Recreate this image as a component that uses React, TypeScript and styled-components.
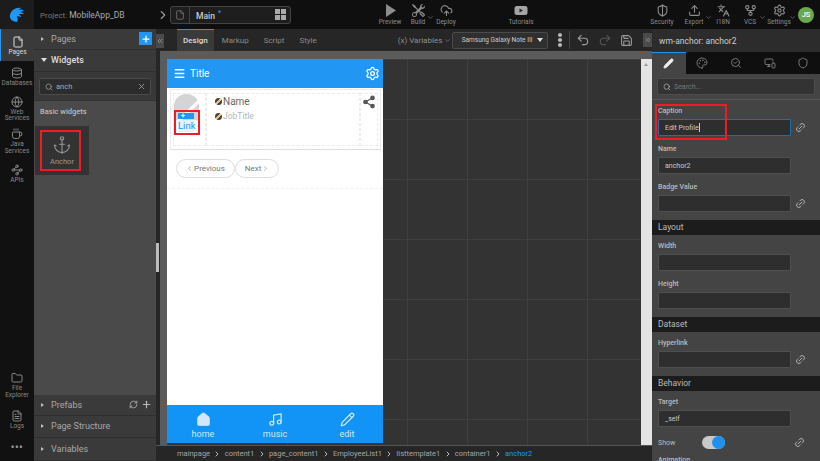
import React from "react";
import styled, { createGlobalStyle } from "styled-components";
import { BsTools } from "react-icons/bs";
import {
  Anchor,
  ChevronDown,
  ChevronLeft,
  ChevronRight,
  ChevronsLeft,
  ChevronsRight,
  CloudUpload,
  Coffee,
  Database,
  File,
  FileText,
  Folder,
  GitFork,
  Globe,
  House,
  Languages,
  Link2,
  Menu,
  MonitorSmartphone,
  Music,
  Palette,
  Pencil,
  Plus,
  Redo2,
  RefreshCw,
  Save,
  Search,
  SearchCheck,
  Settings,
  Share2,
  Shield,
  ShieldHalf,
  Undo2,
  Upload,
  Waypoints,
  X,
} from "lucide-react";

const GlobalStyle = createGlobalStyle`
  html, body {
    margin: 0;
    padding: 0;
    width: 820px;
    height: 461px;
    overflow: hidden;
    background: #111;
    font-family: Roboto, "Liberation Sans", sans-serif;
  }
  * { box-sizing: border-box; }
`;

const Shell = styled.div`
  width: 820px;
  height: 461px;
  display: grid;
  grid-template-columns: 34px 122px 496px 168px;
  grid-template-rows: 29px 432px;
  overflow: hidden;
`;

const TopBar = styled.header`
  grid-column: 1 / 5;
  background: #0f0f0f;
  display: flex;
  align-items: center;
  color: #aaa;
`;

const LogoCell = styled.div`
  width: 34px;
  height: 29px;
  background: #1c1c1c;
  display: flex;
  align-items: center;
  justify-content: center;
`;

const Project = styled.div`
  width: 122px;
  padding-left: 6px;
  font-size: 8px;
  color: #777;
  white-space: nowrap;
  b {
    font-weight: 400;
    color: #aaa;
    font-size: 8.5px;
  }
`;

const Crumb = styled.div`
  width: 14px;
  color: #999;
  display: flex;
`;

const PageSwitch = styled.div`
  width: 121px;
  height: 18px;
  border: 1px solid #444;
  border-radius: 3px;
  background: #1e1e1e;
  display: flex;
  align-items: center;
  color: #ccc;
  font-size: 8.5px;
  font-weight: 500;
`;

const PageIcon = styled.div`
  width: 19px;
  height: 100%;
  border-right: 1px solid #444;
  display: flex;
  align-items: center;
  justify-content: center;
  color: #777;
`;

const PageName = styled.div`
  flex: 1;
  padding-left: 6px;
  sup {
    color: #2196f3;
    font-size: 7px;
    margin-left: 3px;
  }
`;

const GridGlyph = styled.div`
  width: 11px;
  height: 11px;
  margin-right: 4px;
  display: grid;
  grid-template: 1fr 1fr / 1fr 1fr;
  gap: 1px;
  i {
    background: #aaa;
  }
`;

const ToolGroup = styled.div<{ $left: number }>`
  margin-left: ${(p) => p.$left}px;
  display: flex;
  align-items: flex-start;
`;

const Tool = styled.div<{ $w: number }>`
  width: ${(p) => p.$w}px;
  display: flex;
  flex-direction: column;
  align-items: center;
  color: #8c8c8c;
  font-size: 6.5px;
  line-height: 7px;
  gap: 2px;
  position: relative;
  white-space: nowrap;
`;

const Caret = styled(ChevronDown)`
  position: absolute;
  right: -2px;
  top: 10px;
`;

const Avatar = styled.div`
  width: 16px;
  height: 16px;
  margin-left: 4px;
  border-radius: 50%;
  background: #6aa84f;
  color: #fff;
  font-size: 7.5px;
  font-weight: 500;
  display: flex;
  align-items: center;
  justify-content: center;
`;

const Rail = styled.nav`
  background: #111;
  display: flex;
  flex-direction: column;
`;

const RailItem = styled.div<{ $active?: boolean; $h: number; $after?: number }>`
  height: ${(p) => p.$h}px;
  margin-bottom: ${(p) => p.$after ?? 0}px;
  padding-top: 2px;
  display: flex;
  flex-direction: column;
  align-items: center;
  justify-content: center;
  text-align: center;
  gap: 1px;
  font-size: 6.5px;
  line-height: 6.5px;
  color: ${(p) => (p.$active ? "#ddd" : "#888")};
  background: ${(p) => (p.$active ? "#3a3a3a" : "transparent")};
  border-left: ${(p) => (p.$active ? "1px solid #2196f3" : "none")};
`;

const RailSpacer = styled.div`
  flex: 1;
`;

const Dots = styled.div`
  height: 28px;
  display: flex;
  align-items: center;
  justify-content: center;
  color: #999;
  font-size: 10px;
  font-weight: 700;
  letter-spacing: 0.5px;
`;

const SidePanel = styled.aside`
  background: #3d3d3d;
  display: flex;
  flex-direction: column;
  position: relative;
`;

const SideRow = styled.div<{ $h: number; $strong?: boolean }>`
  height: ${(p) => p.$h}px;
  flex: none;
  display: flex;
  align-items: center;
  padding: 0 4px 1px 7px;
  background: #3a3a3a;
  border-bottom: 1px solid #2e2e2e;
  color: ${(p) => (p.$strong ? "#ddd" : "#a8a8a8")};
  font-size: 9px;
  font-weight: ${(p) => (p.$strong ? 500 : 400)};
`;

const Tri = styled.span<{ $down?: boolean }>`
  width: 0;
  height: 0;
  margin-right: ${(p) => (p.$down ? 4 : 7)}px;
  ${(p) =>
    p.$down
      ? "border-left: 3px solid transparent; border-right: 3px solid transparent; border-top: 4px solid #ddd;"
      : "border-top: 2.5px solid transparent; border-bottom: 2.5px solid transparent; border-left: 3px solid #bbb;"}
`;

const SelectTri = styled(Tri)`
  margin-right: 0;
`;

const RowEnd = styled.div`
  margin-left: auto;
  display: flex;
  align-items: center;
  gap: 3px;
  color: #bbb;
`;

const BlueAdd = styled.div`
  width: 13px;
  height: 13px;
  background: #2196f3;
  color: #fff;
  display: flex;
  align-items: center;
  justify-content: center;
`;

const SearchWrap = styled.div`
  height: 29px;
  flex: none;
  padding: 6px 5px;
  background: #383838;
  border-bottom: 1px solid #333;
`;

const SearchBox = styled.div`
  height: 17px;
  border: 1px solid #4a4a4a;
  border-radius: 2px;
  background: #2c2c2c;
  display: flex;
  align-items: center;
  gap: 3px;
  padding: 0 4px 0 5px;
  color: #aaa;
  font-size: 7.5px;
  svg:last-child {
    margin-left: auto;
  }
`;

const WidgetArea = styled.div`
  flex: 1;
  background: #4a4a4a;
  padding: 6px 1px;
`;

const AreaTitle = styled.div`
  color: #bbb;
  font-size: 7.5px;
  font-weight: 500;
  padding-left: 5px;
  line-height: 10px;
`;

const WidgetTile = styled.div`
  margin-top: 9px;
  width: 54px;
  height: 49px;
  background: #333;
  color: #999;
  font-size: 7.5px;
  display: flex;
  flex-direction: column;
  align-items: center;
  justify-content: center;
  gap: 2px;
  position: relative;
`;

const RedBox = styled.div<{ $l: number; $t: number; $w: number; $h: number }>`
  position: absolute;
  left: ${(p) => p.$l}px;
  top: ${(p) => p.$t}px;
  width: ${(p) => p.$w}px;
  height: ${(p) => p.$h}px;
  border: 2px solid #ee1c25;
  pointer-events: none;
`;

const Center = styled.main`
  background: #333;
  display: flex;
  flex-direction: column;
  min-width: 0;
  position: relative;
`;

const Collapse = styled.div`
  position: absolute;
  left: 0;
  top: 5px;
  width: 8px;
  height: 14px;
  background: #4a4a4a;
  color: #aaa;
  display: flex;
  align-items: center;
  justify-content: center;
`;

const Grip = styled.div`
  position: absolute;
  left: 0;
  top: 214px;
  width: 3px;
  height: 29px;
  background: #bbb;
`;

const EditorBar = styled.div`
  height: 22px;
  flex: none;
  background: #262626;
  display: flex;
  align-items: center;
  padding-left: 21px;
  color: #8a8a8a;
  font-size: 8px;
`;

const EditorTab = styled.div<{ $active?: boolean }>`
  height: 22px;
  padding: 0 6px;
  margin-right: ${(p) => (p.$active ? 2 : 3)}px;
  display: flex;
  align-items: center;
  color: ${(p) => (p.$active ? "#ddd" : "#8a8a8a")};
  background: ${(p) => (p.$active ? "#3a3a3a" : "transparent")};
  border-top: ${(p) => (p.$active ? "1px solid #2196f3" : "none")};
  font-weight: ${(p) => (p.$active ? 500 : 400)};
`;

const VarLabel = styled.div`
  margin-left: 72px;
  display: flex;
  align-items: center;
  gap: 2px;
  color: #8f8f8f;
  width: 54px;
  white-space: nowrap;
`;

const DeviceSelect = styled.div`
  width: 96px;
  height: 17px;
  background: #2f2f2f;
  border: 1px solid #4a4a4a;
  border-radius: 2px;
  display: flex;
  align-items: center;
  justify-content: space-between;
  padding: 0 4px 0 9px;
  color: #ccc;
  font-size: 6.5px;
  white-space: nowrap;
`;

const Kebab = styled.div`
  width: 4px;
  margin-left: 10px;
  display: flex;
  flex-direction: column;
  gap: 1.5px;
  i {
    width: 4px;
    height: 3.5px;
    border-radius: 50%;
    background: #b5b5b5;
  }
`;

const EditActions = styled.div`
  margin-left: 7px;
  padding-left: 6px;
  height: 18px;
  border-left: 1px solid #444;
  display: flex;
  align-items: center;
  gap: 8px;
  color: #999;
`;

const CollapseRight = styled.div`
  margin-left: auto;
  width: 9px;
  height: 14px;
  background: #4a4a4a;
  color: #aaa;
  display: flex;
  align-items: center;
  justify-content: center;
`;

const CanvasRow = styled.div`
  flex: 1;
  display: flex;
  min-height: 0;
`;

const Ruler = styled.div`
  width: 11px;
  flex: none;
  background: #5b5b5b;
  border-left: 4px solid #262626;
`;

const Stage = styled.div`
  flex: 1;
  display: flex;
  flex-direction: column;
  min-width: 0;
`;

const TopRuler = styled.div`
  height: 8px;
  flex: none;
  background: #5b5b5b;
`;

const Board = styled.div`
  flex: 1;
  display: flex;
  background-color: #333;
  background-image: linear-gradient(#3f3f3f 1px, transparent 1px),
    linear-gradient(90deg, #3f3f3f 1px, transparent 1px);
  background-size: 60px 60px;
`;

const Phone = styled.div`
  width: 216px;
  margin-bottom: 2px;
  background: #fff;
  display: flex;
  flex-direction: column;
`;

const PhoneHead = styled.div`
  height: 29px;
  flex: none;
  background: #2196f3;
  color: #fff;
  display: flex;
  align-items: center;
  padding: 0 3px 0 6px;
  gap: 4px;
  font-size: 10px;
  svg:last-child {
    margin-left: auto;
  }
`;

const ListItem = styled.div`
  height: 61px;
  flex: none;
  margin: 1px 2px 0 3px;
  border: 1px solid #ececec;
  border-bottom-color: #ddd;
  padding: 3px 2px;
  display: flex;
`;

const Cell = styled.div<{ $w?: number; $grow?: boolean }>`
  width: ${(p) => (p.$w ? `${p.$w}px` : "auto")};
  flex: ${(p) => (p.$grow ? 1 : "none")};
  border: 1px dashed #ececec;
  position: relative;
`;

const TextCell = styled(Cell)`
  padding: 2px 8px;
  display: flex;
  flex-direction: column;
  gap: 4px;
`;

const ShareCell = styled(Cell)`
  display: flex;
  justify-content: center;
  padding-top: 1px;
`;

const Thumb = styled.div`
  position: absolute;
  left: 0;
  top: 0;
  width: 25px;
  height: 26px;
  border-radius: 12px 12px 0 0;
  background: linear-gradient(135deg, #d4d4d4 58%, #fafafa 58%, #fafafa 68%, #d4d4d4 68%);
`;

const LinkWrap = styled.div`
  position: absolute;
  left: 4px;
  top: 19px;
  width: 16px;
`;

const LinkTools = styled.div`
  height: 6px;
  background: #2196f3;
  display: flex;
  align-items: center;
  padding-left: 3px;
  color: #fff;
  font-size: 7px;
  font-weight: 700;
`;

const LinkText = styled.div`
  height: 12px;
  margin-top: 1px;
  background: #e3f1fd;
  color: #2196f3;
  font-size: 9.5px;
  line-height: 12px;
  white-space: nowrap;
`;

const FieldLine = styled.div<{ $sub?: boolean }>`
  display: flex;
  align-items: center;
  gap: 1px;
  color: ${(p) => (p.$sub ? "#b5b5b5" : "#666")};
  font-size: ${(p) => (p.$sub ? 8.5 : 10)}px;
  line-height: 11px;
`;

const BindDot = styled.span`
  width: 7px;
  height: 7px;
  border-radius: 50%;
  background: linear-gradient(135deg, #444 38%, #e8c080 38%, #e8c080 62%, #444 62%);
  flex: none;
`;

const Pager = styled.div`
  height: 39px;
  flex: none;
  border-bottom: 1px dashed #f1f1f1;
  padding: 9px 9px 0;
  display: flex;
`;

const PagerBtn = styled.div<{ $w: number }>`
  width: ${(p) => p.$w}px;
  height: 19px;
  border: 1px solid #ddd;
  border-radius: 10px;
  color: #777;
  font-size: 8px;
  display: flex;
  align-items: center;
  justify-content: center;
  gap: 1px;
`;

const PhoneBody = styled.div`
  flex: 1;
`;

const TabBar = styled.div`
  height: 38px;
  flex: none;
  background: #1194f6;
  display: grid;
  grid-template-columns: repeat(3, 72px);
  color: #cfe8fd;
`;

const TabItem = styled.div`
  display: flex;
  flex-direction: column;
  align-items: center;
  justify-content: center;
  gap: 2px;
  padding-top: 2px;
  font-size: 9px;
  line-height: 10px;
`;

const Scroller = styled.div`
  width: 11px;
  flex: none;
  margin-left: auto;
  background: #e4e4e4;
  position: relative;
  &::before {
    content: "";
    position: absolute;
    left: 3px;
    top: 4px;
    border-left: 2.5px solid transparent;
    border-right: 2.5px solid transparent;
    border-bottom: 3px solid #999;
  }
`;

const Breadcrumb = styled.div`
  height: 16px;
  flex: none;
  background: #262626;
  border-top: 1px solid #555;
  display: flex;
  align-items: center;
  padding-left: 21px;
  gap: 3.3px;
  color: #a5a5a5;
  font-size: 7.5px;
  span:last-child {
    color: #2196f3;
  }
  svg {
    color: #bbb;
  }
`;

const Inspector = styled.aside`
  background: #444;
  display: flex;
  flex-direction: column;
  overflow: hidden;
  position: relative;
`;

const InspectorHead = styled.div`
  height: 23px;
  flex: none;
  background: #2c2c2c;
  color: #ccc;
  font-size: 8.5px;
  display: flex;
  align-items: center;
  padding-left: 7px;
`;

const InspectorTabs = styled.div`
  height: 22px;
  flex: none;
  background: #0f0f0f;
  display: grid;
  grid-template-columns: repeat(5, 33.6px);
`;

const InspectorTab = styled.div<{ $active?: boolean }>`
  display: flex;
  align-items: center;
  justify-content: center;
  color: ${(p) => (p.$active ? "#eee" : "#777")};
  background: ${(p) => (p.$active ? "#444" : "transparent")};
  border-top: ${(p) => (p.$active ? "1px solid #2196f3" : "none")};
`;

const PropSearch = styled.div`
  height: 26px;
  flex: none;
  padding: 4px 5px 5px;
  border-bottom: 1px solid #555;
`;

const PropSearchBox = styled.div`
  height: 17px;
  background: #333;
  border: 1px solid #4c4c4c;
  border-radius: 2px;
  display: flex;
  align-items: center;
  gap: 3px;
  padding-left: 5px;
  color: #777;
  font-size: 7px;
  svg {
    color: #bbb;
  }
`;

const Props = styled.div`
  padding: 6px 0 0 6px;
  display: flex;
  flex-direction: column;
  position: relative;
`;

const PropLabel = styled.div`
  color: #bbb;
  font-size: 7px;
  line-height: 10px;
  font-weight: 500;
`;

const PropLine = styled.div`
  height: 17px;
  margin: 3px 0 8px;
  display: flex;
  align-items: center;
  gap: 4px;
  color: #bbb;
`;

const PropInput = styled.div<{ $focus?: boolean }>`
  width: 133px;
  height: 17px;
  background: #2e2e2e;
  border: 1px solid ${(p) => (p.$focus ? "#1f6fa8" : "#4f4f4f")};
  border-radius: 1px;
  color: #ccc;
  font-size: 7px;
  display: flex;
  align-items: center;
  padding-left: 6px;
`;

const Caretline = styled.span`
  width: 1px;
  height: 9px;
  background: #ccc;
`;

const Band = styled.div`
  height: 15px;
  margin: 0 0 6px -6px;
  background: #1c1c1c;
  color: #bbb;
  font-size: 8.5px;
  line-height: 15px;
  padding-left: 6px;
`;

const ShowRow = styled.div`
  height: 15px;
  display: flex;
  align-items: center;
  color: #bbb;
  font-size: 7px;
  margin: 0 0 5px;
`;

const ToggleTrack = styled.div`
  width: 23px;
  height: 13px;
  margin-left: 27px;
  border-radius: 7px;
  background: #c9c9c9;
  display: flex;
  justify-content: flex-end;
  i {
    width: 13px;
    height: 13px;
    border-radius: 50%;
    background: #1e90f0;
  }
`;

const ChainIcon = styled(Link2)`
  flex: none;
  transform: rotate(-45deg);
`;

const ShowChain = styled(ChainIcon)`
  margin-left: 69px;
`;

function Field({ label, value, focus, link }: { label: string; value?: React.ReactNode; focus?: boolean; link?: boolean }) {
  return (
    <>
      <PropLabel>{label}</PropLabel>
      <PropLine>
        <PropInput $focus={focus}>{value}</PropInput>
        {link && <ChainIcon size={11} />}
      </PropLine>
    </>
  );
}

const crumbs = ["mainpage", "content1", "page_content1", "EmployeeList1", "listtemplate1", "container1"];

export default function App() {
  return (
    <>
      <GlobalStyle />
      <Shell>
        <TopBar>
          <LogoCell>
            <svg width="16" height="16" viewBox="0 0 16 16">
              <path d="M1 8C2 3 7 0 12 1L9 3c3-1 5 0 6 1l-4 1c2 0 3 1 4 2l-5 0c1 1 2 2 2 3l-4-1c1 2 1 4 0 6C4 15 0 12 1 8z" fill="#2196f3" />
            </svg>
          </LogoCell>
          <Project>
            Project: <b>MobileApp_DB</b>
          </Project>
          <Crumb>
            <ChevronRight size={14} />
          </Crumb>
          <PageSwitch>
            <PageIcon>
              <File size={10} />
            </PageIcon>
            <PageName>
              Main<sup>*</sup>
            </PageName>
            <GridGlyph>
              <i />
              <i />
              <i />
              <i />
            </GridGlyph>
          </PageSwitch>
          <ToolGroup $left={85}>
            <Tool $w={28}>
              <svg width="11" height="13" viewBox="0 0 11 13">
                <path d="M1 0l10 6.5L1 13z" fill="#8c8c8c" />
              </svg>
              Preview
            </Tool>
            <Tool $w={28}>
              <BsTools size={13} />
              Build
              <Caret size={7} />
            </Tool>
            <Tool $w={28}>
              <CloudUpload size={13} />
              Deploy
            </Tool>
          </ToolGroup>
          <ToolGroup $left={46}>
            <Tool $w={30}>
              <svg width="14" height="13" viewBox="0 0 14 13">
                <rect x="0.5" y="2" width="13" height="9" rx="2.5" fill="#a5a5a5" />
                <path d="M5.5 4.5l3.5 2-3.5 2z" fill="#222" />
              </svg>
              Tutorials
            </Tool>
          </ToolGroup>
          <ToolGroup $left={110}>
            <Tool $w={32}>
              <ShieldHalf size={13} />
              Security
            </Tool>
            <Tool $w={32}>
              <Upload size={13} />
              Export
              <Caret size={7} />
            </Tool>
            <Tool $w={26}>
              <Languages size={13} />
              I18N
            </Tool>
            <Tool $w={28}>
              <GitFork size={13} />
              VCS
              <Caret size={7} />
            </Tool>
            <Tool $w={30}>
              <Settings size={13} />
              Settings
              <Caret size={7} />
            </Tool>
          </ToolGroup>
          <Avatar>JS</Avatar>
        </TopBar>

        <Rail>
          <RailItem $active $h={32}>
            <File size={12} />
            Pages
          </RailItem>
          <RailItem $h={30}>
            <Database size={12} />
            Databases
          </RailItem>
          <RailItem $h={33}>
            <Globe size={12} />
            Web
            <br />
            Services
          </RailItem>
          <RailItem $h={32}>
            <Coffee size={12} />
            Java
            <br />
            Services
          </RailItem>
          <RailItem $h={34}>
            <Waypoints size={12} />
            APIs
          </RailItem>
          <RailSpacer />
          <RailItem $h={30} $after={6}>
            <Folder size={12} />
            File
            <br />
            Explorer
          </RailItem>
          <RailItem $h={28}>
            <FileText size={12} />
            Logs
          </RailItem>
          <Dots>•••</Dots>
        </Rail>

        <SidePanel>
          <SideRow $h={21}>
            <Tri />
            Pages
            <RowEnd>
              <BlueAdd>
                <Plus size={10} strokeWidth={3} />
              </BlueAdd>
            </RowEnd>
          </SideRow>
          <SideRow $h={22} $strong>
            <Tri $down />
            Widgets
          </SideRow>
          <SearchWrap>
            <SearchBox>
              <Search size={8} />
              anch
              <X size={9} />
            </SearchBox>
          </SearchWrap>
          <WidgetArea>
            <AreaTitle>Basic widgets</AreaTitle>
            <WidgetTile>
              <Anchor size={20} strokeWidth={1.3} />
              Anchor
              <RedBox $l={5} $t={4} $w={41} $h={41} />
            </WidgetTile>
          </WidgetArea>
          <SideRow $h={21}>
            <Tri />
            Prefabs
            <RowEnd>
              <RefreshCw size={9} />
              <Plus size={11} strokeWidth={2.5} />
            </RowEnd>
          </SideRow>
          <SideRow $h={22}>
            <Tri />
            Page Structure
          </SideRow>
          <SideRow $h={23}>
            <Tri />
            Variables
          </SideRow>
        </SidePanel>

        <Center>
          <Collapse>
            <ChevronsLeft size={8} />
          </Collapse>
          <Grip />
          <EditorBar>
            <EditorTab $active>Design</EditorTab>
            <EditorTab>Markup</EditorTab>
            <EditorTab>Script</EditorTab>
            <EditorTab>Style</EditorTab>
            <VarLabel>
              (x) Variables
              <ChevronDown size={7} />
            </VarLabel>
            <DeviceSelect>
              Samsung Galaxy Note III
              <SelectTri $down />
            </DeviceSelect>
            <Kebab>
              <i />
              <i />
              <i />
            </Kebab>
            <EditActions>
              <Undo2 size={14} />
              <Redo2 size={14} color="#555" />
              <Save size={13} />
            </EditActions>
            <CollapseRight>
              <ChevronsRight size={8} />
            </CollapseRight>
          </EditorBar>
          <CanvasRow>
            <Ruler />
            <Stage>
              <TopRuler />
              <Board>
                <Phone>
                  <PhoneHead>
                    <Menu size={13} strokeWidth={2.5} />
                    Title
                    <Settings size={15} />
                  </PhoneHead>
                  <ListItem>
                    <Cell $w={33}>
                      <Thumb />
                      <LinkWrap>
                        <LinkTools>+</LinkTools>
                        <LinkText>Link</LinkText>
                      </LinkWrap>
                      <RedBox $l={0} $t={16} $w={26} $h={25} />
                    </Cell>
                    <TextCell $grow>
                      <FieldLine>
                        <BindDot />
                        Name
                      </FieldLine>
                      <FieldLine $sub>
                        <BindDot />
                        JobTitle
                      </FieldLine>
                    </TextCell>
                    <ShareCell $w={18}>
                      <Share2 size={14} color="#555" fill="#555" />
                    </ShareCell>
                  </ListItem>
                  <Pager>
                    <PagerBtn $w={59}>
                      <ChevronLeft size={7} />
                      Previous
                    </PagerBtn>
                    <PagerBtn $w={44}>
                      Next
                      <ChevronRight size={7} />
                    </PagerBtn>
                  </Pager>
                  <PhoneBody />
                  <TabBar>
                    <TabItem>
                      <House size={15} fill="#cfe8fd" />
                      home
                    </TabItem>
                    <TabItem>
                      <Music size={15} />
                      music
                    </TabItem>
                    <TabItem>
                      <Pencil size={15} />
                      edit
                    </TabItem>
                  </TabBar>
                </Phone>
                <Scroller />
              </Board>
            </Stage>
          </CanvasRow>
          <Breadcrumb>
            {crumbs.map((c) => (
              <React.Fragment key={c}>
                <span>{c}</span>
                <ChevronRight size={8} strokeWidth={3} />
              </React.Fragment>
            ))}
            <span>anchor2</span>
          </Breadcrumb>
        </Center>

        <Inspector>
          <InspectorHead>wm-anchor: anchor2</InspectorHead>
          <InspectorTabs>
            <InspectorTab $active>
              <Pencil size={11} fill="#eee" />
            </InspectorTab>
            <InspectorTab>
              <Palette size={12} />
            </InspectorTab>
            <InspectorTab>
              <SearchCheck size={12} />
            </InspectorTab>
            <InspectorTab>
              <MonitorSmartphone size={12} />
            </InspectorTab>
            <InspectorTab>
              <Shield size={12} />
            </InspectorTab>
          </InspectorTabs>
          <PropSearch>
            <PropSearchBox>
              <Search size={8} />
              Search...
            </PropSearchBox>
          </PropSearch>
          <Props>
            <RedBox $l={3} $t={4} $w={72} $h={36} />
            <Field
              label="Caption"
              focus
              link
              value={
                <>
                  Edit Profile
                  <Caretline />
                </>
              }
            />
            <Field label="Name" value="anchor2" />
            <Field label="Badge Value" link />
            <Band>Layout</Band>
            <Field label="Width" />
            <Field label="Height" />
            <Band>Dataset</Band>
            <Field label="Hyperlink" link />
            <Band>Behavior</Band>
            <Field label="Target" value="_self" />
            <ShowRow>
              Show
              <ToggleTrack>
                <i />
              </ToggleTrack>
              <ShowChain size={11} />
            </ShowRow>
            <PropLabel>Animation</PropLabel>
          </Props>
        </Inspector>
      </Shell>
    </>
  );
}
